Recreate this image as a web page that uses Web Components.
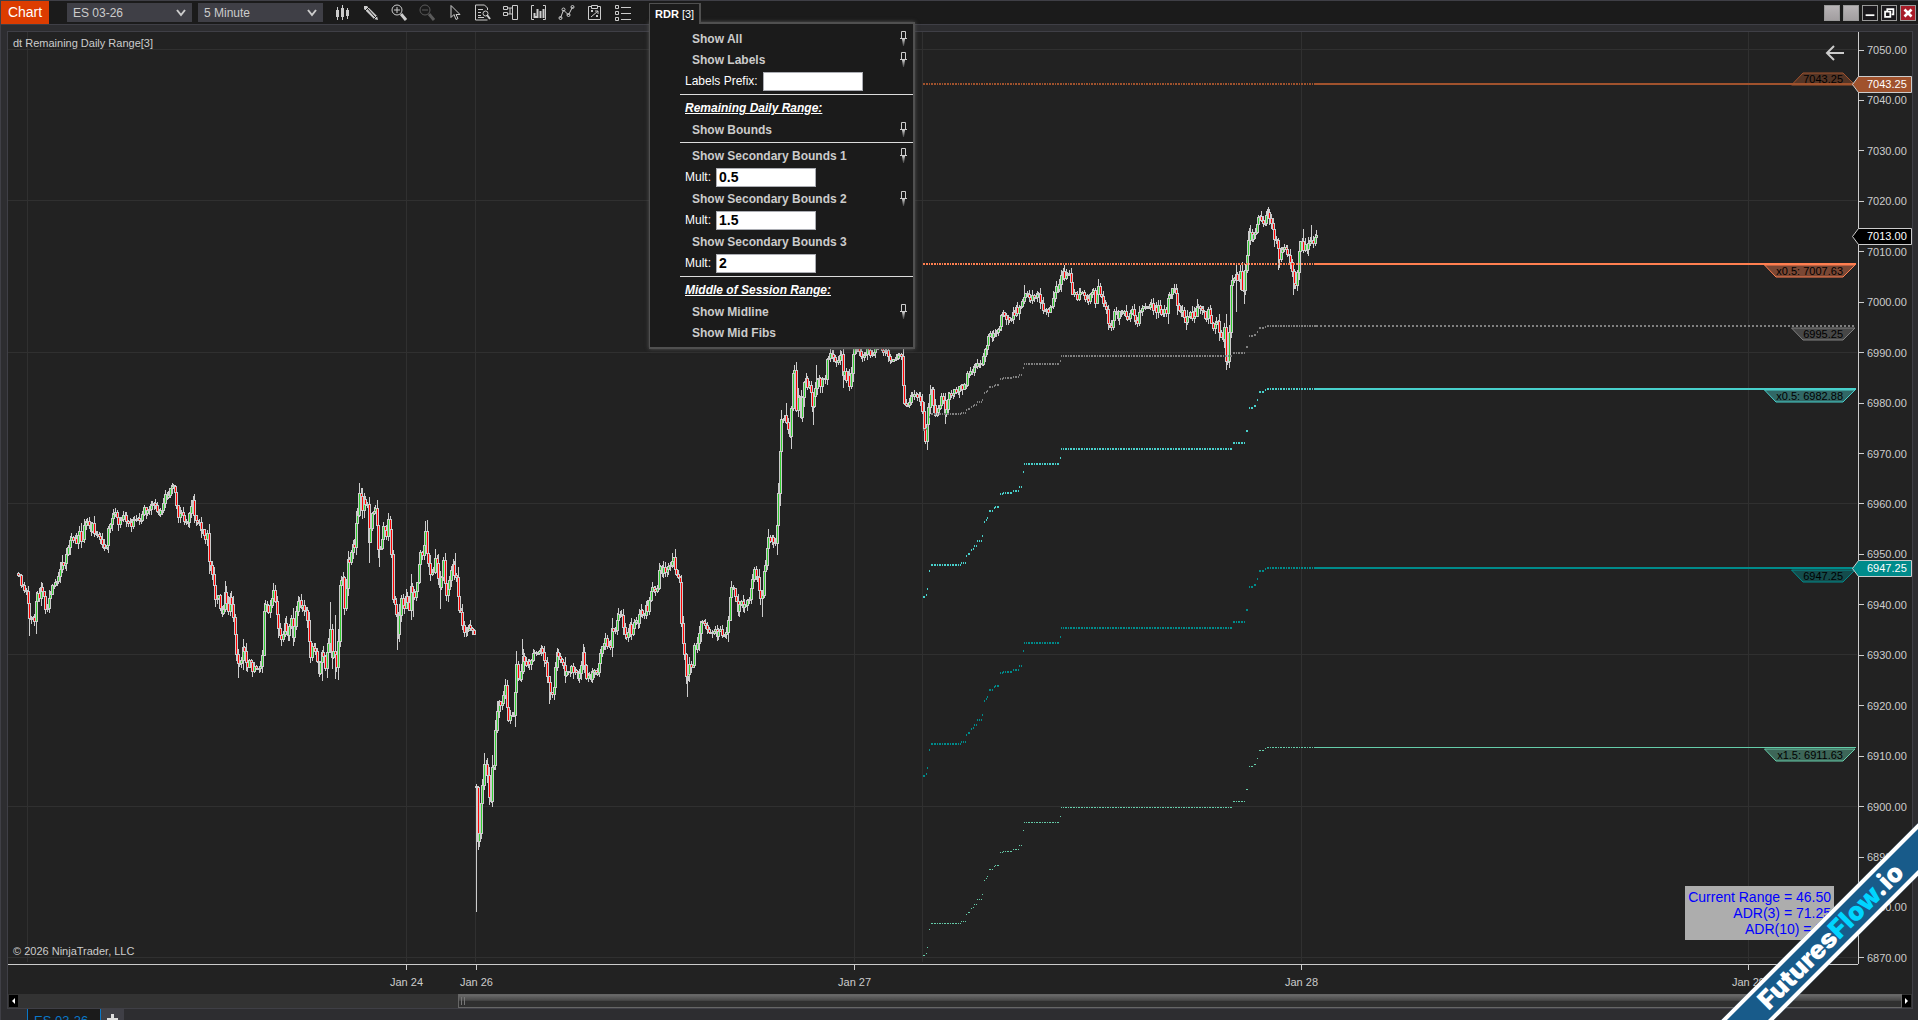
<!DOCTYPE html>
<html lang="en">
<head>
<meta charset="utf-8">
<title>Chart - ES 03-26</title>
<style>
  html, body {
    height: 100%;
    margin: 0;
    overflow: hidden;
    background: #2d2d30;
    color: #ccc;
    font-family: "Liberation Sans", Arial, sans-serif;
    font-size: 11px;
  }
</style>
</head>
<body>
<chart-window></chart-window>

<script>
// ---------- Icons ----------

const ICONS = {
  candles: '<path d="M3.5 3v3M3.5 13v3M8.5 1v3M8.5 13v3M13.5 4v2M13.5 12v3"/><path d="M2 6h3v7H2zM7 4h3v9H7zM12 6h3v6h-3z" fill="currentColor" stroke="none"/>',
  pencil: '<path d="M2 2l3 0 10 10 1 4-4-1L2 5z" fill="currentColor" stroke="none"/><path d="M3 7l4-4M12 15l3-3M5 4l8 9" stroke="#1b1b1b"/>',
  zoomIn: '<circle cx="7" cy="6" r="5"/><path d="M7 3v6M4 6h6"/><path d="M11 10l5 6" stroke-width="3"/>',
  zoomOut: '<circle cx="7" cy="6" r="5"/><path d="M4 6h6"/><path d="M11 10l5 6" stroke-width="3"/>',
  cursor: '<path d="M5 1.5v12l3-3 2 5 2-1-2-4h4z"/>',
  report: '<path d="M13.500 6V4l-3-3h-9v15h12M4 5.500h5M4 8.500h3M4 11.500h3M4 13.500h6"/><circle cx="11.500" cy="9.500" r="2.500"/><path d="M13 11l3 4" stroke-width="2"/>',
  panels: '<path d="M1.500 2.500h4v3h-4zM1.500 8.500h4v3h-4zM6 4h4M6 10h4M10.500 1.500h5v14h-5zM8 4v6"/>',
  indicators: '<path d="M4 1.500H1.500V15.500H4M13 1.500h2.500v14H13"/><path d="M4.500 9v5M7.500 5v9M10.500 7v7M13.500 5v9M6 12v2" stroke-width="2"/>',
  strategy: '<path d="M2.500 14l3-8 5 5 4-8"/><circle cx="2.500" cy="14" r="1.500"/><circle cx="5.500" cy="5.500" r="1.500"/><circle cx="10.500" cy="11" r="1.500"/><circle cx="14.500" cy="3" r="1.500"/>',
  template: '<path d="M5 2.500H2.500v13h12v-13H12M5.500 1.500h6v3h-6zM5 6l2 2M7 6l-2 2M10 11l2 2M12 11l-2 2M5 13l7-6M9 7h3v3"/>',
  list: '<path d="M1.500 1.500h3v3h-3zM1.500 7.500h3v3h-3zM1.500 13.500h3v3h-3zM7 3.500h10M7 9.500h10M7 15.500h10"/>'
};

class ToolIcon extends HTMLElement {
  constructor() {
    super();
    this.attachShadow({ mode: 'open' });
  }

  connectedCallback() {
    const name = this.getAttribute('name');
    const disabled = this.hasAttribute('off');
    this.shadowRoot.innerHTML = `
      <style>
        :host { display: block; }
        button {
          display: grid;
          place-items: center;
          width: 28px;
          height: 22px;
          padding: 0;
          border: 0;
          background: none;
          color: #ccc;
        }
        button:disabled { color: #5a5a5a; }
        svg { width: 18px; height: 18px; }
      </style>
      <button type="button" aria-label="${this.getAttribute('label')}" ${disabled ? 'disabled' : ''}>
        <svg viewBox="0 0 18 18" fill="none" stroke="currentColor">${ICONS[name]}</svg>
      </button>
    `;
  }
}
customElements.define('tool-icon', ToolIcon);

class WindowButton extends HTMLElement {
  constructor() {
    super();
    this.attachShadow({ mode: 'open' });
  }

  connectedCallback() {
    const kind = this.getAttribute('kind');
    const glyphs = {
      blank: '',
      minimize: '<path d="M3 10.500h10" stroke-width="2"/>',
      restore: '<path d="M6 6V3.500h7v6h-2" stroke-width="2"/><path d="M3.500 6.500h6v6h-6z" stroke-width="2"/>',
      close: '<path d="M4 4l8 8M12 4l-8 8" stroke-width="3"/>'
    };
    this.shadowRoot.innerHTML = `
      <style>
        :host { display: block; }
        button {
          display: block;
          width: 16px;
          height: 16px;
          padding: 0;
          border: 1px solid #999;
          background: #1a181c;
        }
        .blank { background: linear-gradient(#b8b4b6, #a29ea0); }
        .close { background: #a81c28; }
        svg { display: block; width: 14px; height: 14px; }
      </style>
      <button type="button" class="${kind}" aria-label="${this.getAttribute('label')}">
        <svg viewBox="0 0 16 16" fill="none" stroke="#fff">${glyphs[kind]}</svg>
      </button>
    `;
  }
}
customElements.define('window-button', WindowButton);

class ToolSelect extends HTMLElement {
  constructor() {
    super();
    this.attachShadow({ mode: 'open' });
  }

  connectedCallback() {
    this.shadowRoot.innerHTML = `
      <style>
        :host { display: grid; width: 125px; height: 19px; align-items: center; }
        select, svg { grid-area: 1 / 1; }
        select {
          appearance: none;
          width: 100%;
          height: 100%;
          padding: 0 6px;
          border: 0;
          background: #3f3f46;
          color: #ccc;
          font: 12px "Liberation Sans", Arial, sans-serif;
        }
        svg { justify-self: end; width: 10px; height: 8px; margin-right: 6px; pointer-events: none; }
      </style>
      <select aria-label="${this.getAttribute('label')}"><option>${this.getAttribute('value')}</option></select>
      <svg viewBox="0 0 10 8" fill="none" stroke="#ccc" stroke-width="2"><path d="M1 1l4 5 4-5"/></svg>
    `;
  }
}
customElements.define('tool-select', ToolSelect);

// ---------- Indicator menu ----------

class MenuToggle extends HTMLElement {
  constructor() {
    super();
    this.attachShadow({ mode: 'open' });
  }

  connectedCallback() {
    const pin = this.hasAttribute('pinned')
      ? `<svg viewBox="0 0 7 15" fill="none">
           <defs><linearGradient id="fade" x2="0" y2="1"><stop stop-color="#ccc"/><stop offset="1" stop-color="#444"/></linearGradient></defs>
           <path d="M1.500 7V0.500h4V7M0 7.500h7" stroke="#ccc"/><path d="M2 8h3l-1 7h-1z" fill="url(#fade)"/>
         </svg>`
      : '';
    this.shadowRoot.innerHTML = `
      <style>
        :host { display: block; }
        button {
          display: flex;
          justify-content: space-between;
          align-items: center;
          width: 100%;
          height: 21px;
          padding: 0 6px 0 12px;
          border: 0;
          background: none;
          color: #ccc;
          font: bold 12px "Liberation Sans", Arial, sans-serif;
        }
        svg { width: 7px; height: 15px; }
      </style>
      <button type="button" aria-pressed="${this.hasAttribute('pinned')}"><slot></slot>${pin}</button>
    `;
  }
}
customElements.define('menu-toggle', MenuToggle);

class MenuField extends HTMLElement {
  constructor() {
    super();
    this.attachShadow({ mode: 'open' });
  }

  connectedCallback() {
    this.shadowRoot.innerHTML = `
      <style>
        :host { display: block; }
        div { display: flex; align-items: center; gap: 5px; height: 22px; padding-left: 5px; color: #fff; }
        label { font-size: 12px; }
        input {
          box-sizing: border-box;
          width: 100px;
          height: 19px;
          padding: 0 2px;
          border: 1px solid #abadb3;
          background: #fff;
          color: #000;
          font: bold 14px "Liberation Sans", Arial, sans-serif;
        }
      </style>
      <div>
        <label for="field">${this.getAttribute('label')}</label>
        <input id="field" type="text" value="${this.getAttribute('value') || ''}">
      </div>
    `;
  }
}
customElements.define('menu-field', MenuField);

class IndicatorMenu extends HTMLElement {
  constructor() {
    super();
    this.attachShadow({ mode: 'open' });
  }

  connectedCallback() {
    this.shadowRoot.innerHTML = `
      <style>
        :host { display: block; position: relative; z-index: 5; align-self: flex-end; }
        .tab {
          position: relative;
          z-index: 1;
          display: block;
          height: 21px;
          padding: 0 5px;
          border: 1px solid #505050;
          border-width: 1px 2px 0 1px;
          background: #1b1b1b;
          color: #fff;
          font: 11px/18px "Liberation Sans", Arial, sans-serif;
        }
        .menu {
          position: absolute;
          top: 19px;
          left: 0;
          box-sizing: border-box;
          width: 266px;
          padding: 4px 0 4px 30px;
          border: 1px solid #505050;
          border-width: 2px 2px 2px 1px;
          background: #1b1b1b;
          box-shadow: 0 0 4px #555;
        }
        hr { height: 1px; margin: 2px 0; border: 0; background: #ddd; }
        h2 {
          height: 22px;
          margin: 0;
          padding-left: 5px;
          color: #fff;
          font: italic bold 12px/23px "Liberation Sans", Arial, sans-serif;
          text-decoration: underline;
        }
      </style>
      <button class="tab" type="button" aria-expanded="true"><b>RDR</b> [3]</button>
      <div class="menu">
        <menu-toggle pinned>Show All</menu-toggle>
        <menu-toggle pinned>Show Labels</menu-toggle>
        <menu-field label="Labels Prefix:"></menu-field>
        <hr>
        <h2>Remaining Daily Range:</h2>
        <menu-toggle pinned>Show Bounds</menu-toggle>
        <hr>
        <menu-toggle pinned>Show Secondary Bounds 1</menu-toggle>
        <menu-field label="Mult:" value="0.5"></menu-field>
        <menu-toggle pinned>Show Secondary Bounds 2</menu-toggle>
        <menu-field label="Mult:" value="1.5"></menu-field>
        <menu-toggle>Show Secondary Bounds 3</menu-toggle>
        <menu-field label="Mult:" value="2"></menu-field>
        <hr>
        <h2>Middle of Session Range:</h2>
        <menu-toggle pinned>Show Midline</menu-toggle>
        <menu-toggle>Show Mid Fibs</menu-toggle>
      </div>
    `;
  }
}
customElements.define('indicator-menu', IndicatorMenu);

class ChartToolbar extends HTMLElement {
  constructor() {
    super();
    this.attachShadow({ mode: 'open' });
  }

  connectedCallback() {
    this.shadowRoot.innerHTML = `
      <style>
        :host {
          display: flex;
          align-items: center;
          box-sizing: border-box;
          height: 25px;
          border: 1px solid #3f3f46;
          border-right: 0;
          background: #1b1b1b;
        }
        .title {
          align-self: stretch;
          width: 48px;
          margin: 0 18px 0 0;
          background: #dc3c00;
          color: #fff;
          font: 14px/22px "Liberation Sans", Arial, sans-serif;
          text-align: center;
        }
        tool-select + tool-select { margin-left: 6px; }
        .tools { display: flex; margin: 0 12px 0 6px; }
        .window { display: flex; gap: 3px; margin: 0 2px 0 auto; }
      </style>
      <h1 class="title">Chart</h1>
      <tool-select label="Instrument" value="ES 03-26"></tool-select>
      <tool-select label="Interval" value="5 Minute"></tool-select>
      <div class="tools">
        <tool-icon name="candles" label="Chart style"></tool-icon>
        <tool-icon name="pencil" label="Drawing tools"></tool-icon>
        <tool-icon name="zoomIn" label="Zoom in"></tool-icon>
        <tool-icon name="zoomOut" label="Zoom out" off></tool-icon>
        <tool-icon name="cursor" label="Cursor"></tool-icon>
        <tool-icon name="report" label="Data box"></tool-icon>
        <tool-icon name="panels" label="Chart trader"></tool-icon>
        <tool-icon name="indicators" label="Indicators"></tool-icon>
        <tool-icon name="strategy" label="Strategies"></tool-icon>
        <tool-icon name="template" label="Strategy performance"></tool-icon>
        <tool-icon name="list" label="Properties"></tool-icon>
      </div>
      <indicator-menu></indicator-menu>
      <div class="window">
        <window-button kind="blank" label="Link instrument"></window-button>
        <window-button kind="blank" label="Link interval"></window-button>
        <window-button kind="minimize" label="Minimize"></window-button>
        <window-button kind="restore" label="Restore"></window-button>
        <window-button kind="close" label="Close"></window-button>
      </div>
    `;
  }
}
customElements.define('chart-toolbar', ChartToolbar);

// ---------- Chart ----------

const PLOT = { left: 8, top: 32, width: 1850, height: 932 };
const BAR_STEP = 1.616;
const SESSION_LINES = [27, 406, 475, 854, 922, 1301, 1748];

const yOf = (price) => 49.5 + (7050 - price) * 5.044;
const topPct = (price) => ((yOf(price) - PLOT.top) / PLOT.height * 100).toFixed(2) + '%';

// close path of each stretch of bars, as x,y pairs in plot units
const STRETCHES = [
  `18,573 22,588 25,591 27,587 29,623 32,612 34,620 36,595 38,598 41,590 43,592 46,610 49,598 53,583 57,582
   61,563 67,557 69,538 71,542 74,538 77,547 78,532 82,540 84,530 87,520 88,529 92,525 95,532 100,542 107,546
   109,525 112,514 115,516 118,523 123,517 128,523 133,523 137,517 142,524 143,509 147,514 151,504 156,509
   160,512 164,500 166,492 168,495 171,489 174,489 177,513 182,517 188,522 189,509 193,503 195,518 199,520
   201,530 204,537 207,532 208,560 211,567 214,590 216,602 218,592 221,613 223,613 225,593 228,610 230,598
   233,617 235,640 237,665 240,663 242,651 245,652 247,667 250,657 253,670 257,670 260,673 262,655 263,618
   266,603 269,612 271,595 274,590 276,612 278,625 282,638 284,623 288,633 291,618 292,640 295,627 296,608
   297,597 300,602 303,610 306,613 308,630 310,663 313,645 316,648 318,673 320,667 322,653 325,667 328,647
   330,630 332,665 334,640 336,672 338,640 339,596 340,572 343,580 345,615 347,558 349,568 352,547 355,550
   356,518 358,510 359,492 362,507 365,499 368,512 369,550 371,512 376,509 378,545 382,543 383,520 386,542
   388,522 391,540 392,590 396,612 397,637 399,620 401,595 404,610 406,593 409,608 411,578 413,600 417,587
   419,558 420,547 423,557 425,532 427,555 430,572 433,573 436,555 438,573 440,590 443,564 446,592 449,587
   452,563 454,580 457,576 458,608 462,615 463,635 466,627 471,628 475,635`,
  `476,786 477,842 479,837 480,803 482,792 484,762 487,762 488,793 491,800 492,767 494,765 495,735 496,722
   498,703 501,711 503,702 505,686 507,706 508,717 512,710 514,713 516,660 519,687 521,677 523,652 526,663
   530,662 532,652 535,653 538,649 542,654 545,660 548,683 550,689 553,693 555,665 557,652 560,663 565,672
   568,667 573,672 577,678 581,670 582,655 583,654 586,677 590,677 593,670 598,676 599,662 602,648 604,637
   607,645 611,643 612,626 616,628 618,617 622,616 623,630 626,635 629,626 632,633 636,617 638,625 639,610
   642,617 645,609 648,610 649,597 652,587 657,587 659,562 662,570 664,572 667,570 670,563 673,557 675,572
   678,577 680,587 681,622 683,645 685,663 687,682 689,664 692,667 694,646 697,646 699,635 702,616 706,623
   709,632 713,635 717,632 720,628 723,635 726,640 728,622 729,595 733,586 735,600 738,607 742,603 743,610
   747,603 749,597 751,582 754,571 757,578 759,590 762,598 764,568 766,560 767,545 770,537 775,542 776,537
   777,515 779,473 780,450 781,425 784,415 787,423 790,437 792,380 794,365 796,406 799,395 801,419 803,387
   805,377 808,388 811,393 813,412 814,387 817,380 821,385 824,380 826,378 827,355 832,356 836,362 839,355
   841,355 843,373 847,378 850,385 852,362 853,347 858,345 861,358 865,353 868,345 872,358 877,345 883,350
   888,353 892,360 897,352 901,354 902,383 904,403 907,407 909,398 912,392 917,397 921,400 923,417 924,439
   926,438 927,417 929,402 931,390 932,392 934,415 937,407 941,398 943,397 944,414 947,405 948,393 952,395
   954,389 958,390 962,387 966,383 967,375 972,373 977,363 982,366 983,358 984,345 988,342 989,333 993,335
   994,330 1000,329 1001,317 1004,314 1010,317 1014,312 1021,310 1023,295 1027,297 1033,297 1038,297
   1042,307 1045,312 1049,310 1053,297 1056,288 1060,287 1061,273 1065,277 1069,277 1071,287 1075,295
   1078,299 1080,290 1084,293 1088,299 1091,287 1093,288 1095,302 1098,290 1102,297 1105,305 1107,317
   1111,328 1113,317 1118,313 1122,318 1125,312 1129,320 1132,313 1136,325 1138,313 1142,307 1148,307
   1155,307 1160,310 1164,315 1167,307 1168,295 1170,299 1172,289 1176,291 1177,305 1182,312 1185,324
   1188,312 1193,315 1198,307 1203,315 1207,317 1209,308 1211,328 1214,323 1217,320 1221,333 1223,338
   1224,327 1226,361 1228,361 1229,333 1230,315 1231,275 1235,277 1237,280 1241,275 1243,299 1245,272
   1247,258 1248,243 1250,235 1255,233 1257,223 1259,213 1262,227 1265,222 1267,213 1270,217 1272,232
   1276,237 1278,248 1279,262 1282,250 1283,238 1286,255 1289,253 1292,267 1293,283 1296,290 1297,267
   1299,243 1301,239 1303,247 1306,248 1309,238 1312,235 1313,242 1317,237`
];

// long shadows: x, high, low
const LONG_WICKS = [
  [29, 600, 636], [322, 660, 681], [330, 602, 640], [335, 615, 679], [238, 660, 678], [359, 484, 500],
  [369, 520, 563], [379, 530, 567], [397, 620, 650], [425, 523, 540], [440, 580, 609], [455, 553, 570],
  [413, 590, 617], [476, 786, 912], [478, 830, 850], [522, 639, 655], [549, 680, 704], [583, 648, 660],
  [687, 670, 697], [672, 553, 560], [762, 590, 617], [791, 420, 447], [786, 403, 420], [813, 400, 425],
  [816, 365, 380], [925, 430, 443], [930, 385, 395], [1024, 285, 295], [1061, 270, 280], [1111, 320, 331],
  [1186, 320, 330], [1236, 265, 312], [1240, 268, 290], [1244, 280, 304], [1249, 228, 245],
  [1267, 209, 215], [1278, 250, 270], [1293, 280, 295], [1303, 229, 240], [1311, 225, 240]
];

// session mid/bound steps: first x of the step, y of the upper secondary bound
const STEPS = [
  [923, 597], [925, 595], [927, 589], [928, 571], [930, 565], [961, 563], [966, 556], [967, 554], [970, 550],
  [972, 549], [974, 546], [977, 541], [982, 536], [983, 522], [985, 520], [987, 518], [988, 511], [993, 508],
  [995, 507], [1000, 494], [1003, 493], [1013, 491], [1019, 487], [1022, 472], [1024, 464], [1060, 458],
  [1061, 449], [1233, 443], [1246, 431], [1248, 420], [1249, 408], [1254, 406], [1256, 402], [1257, 400],
  [1258, 392], [1265, 390], [1267, 389]
];

const LEVELS = [
  { price: 7043.25, color: '#a0522d', flat: true, up: true },
  { price: 7007.63, color: '#ff7f50', flat: true, prefix: 'x0.5: ' },
  { price: 6995.25, color: '#808080', ratio: 0.5, dotted: true },
  { price: 6982.88, color: '#48d1cc', ratio: 1, prefix: 'x0.5: ' },
  { price: 6947.25, color: '#008b8b', ratio: 1 },
  { price: 6911.63, color: '#66cdaa', ratio: 1, thin: true, prefix: 'x1.5: ' }
];

function seeded(seed) {
  let s = seed;
  return () => {
    s = (s * 1103515245 + 12345) % 2147483648;
    return s / 2147483648;
  };
}

function buildBars(text) {
  const pts = text.trim().split(/\s+/).map((p) => p.split(',').map(Number));
  const rnd = seeded(pts[0][0] * 31);
  const bars = [];
  let k = 0;
  let open = pts[0][1];
  for (let x = pts[0][0]; x <= pts[pts.length - 1][0]; x += BAR_STEP) {
    while (k < pts.length - 2 && pts[k + 1][0] < x) k++;
    const [x0, y0] = pts[k];
    const [x1, y1] = pts[k + 1];
    const t = Math.min(1, (x - x0) / (x1 - x0));
    const close = Math.round(y0 + (y1 - y0) * t + (rnd() - 0.5) * 9);
    const reach = 4 + Math.min(9, Math.abs(close - open) * 0.4);
    bars.push({
      x: Math.round(x),
      open,
      close,
      high: Math.round(Math.min(open, close) - rnd() * reach),
      low: Math.round(Math.max(open, close) + rnd() * reach)
    });
    open = close;
  }
  return bars;
}

function candleMarkup() {
  let out = '';
  for (const [x, high, low] of LONG_WICKS) {
    out += `<path fill="#ccc" d="M${x} ${high}h1v${low - high}h-1z"/>`;
  }
  for (const stretch of STRETCHES) {
    for (const b of buildBars(stretch)) {
      const top = Math.min(b.open, b.close);
      const h = Math.max(1, Math.abs(b.open - b.close));
      out += `<path fill="#ccc" d="M${b.x} ${b.high}h1v${b.low - b.high + 1}h-1zM${b.x - 1} ${top}h3v${h + 1}h-3z"/>`;
      if (h > 1) {
        out += `<path fill="${b.close < b.open ? '#32cd32' : '#f00'}" d="M${b.x} ${top + 1}h1v${h - 1}h-1z"/>`;
      }
    }
  }
  return out;
}

function levelMarkup(level) {
  const end = Math.floor(yOf(level.price));
  const h = level.thin ? 1 : 2;
  let d = '';
  let k = 0;
  for (let x = 923; x < 1317; x += BAR_STEP) {
    while (k < STEPS.length - 1 && STEPS[k + 1][0] <= x) k++;
    const y = level.flat ? end : Math.round(end + (STEPS[k][1] - 389) * level.ratio);
    d += `M${Math.floor(x)} ${y}h1v${h}h-1z`;
  }
  const dash = level.dotted ? 'stroke-dasharray="2 2"' : '';
  return `<path fill="${level.color}" d="${d}"/>
    <path fill="none" stroke="${level.color}" stroke-width="${h}" ${dash} d="M1316 ${end + h / 2}H1856"/>`;
}

class LevelLabel extends HTMLElement {
  constructor() {
    super();
    this.attachShadow({ mode: 'open' });
  }

  connectedCallback() {
    const color = this.getAttribute('color');
    const up = this.hasAttribute('up');
    const w = this.hasAttribute('wide') ? 92 : 65;
    const shape = up
      ? `M0.500 12.500L12 0.500H${w - 13}L${w - 1} 12.500z`
      : `M0.500 0.500H${w - 1}L${w - 13} 12.500H12z`;
    this.shadowRoot.innerHTML = `
      <style>
        :host { display: grid; width: ${w}px; height: 13px; color: #000; }
        svg, span { grid-area: 1 / 1; }
        svg { width: 100%; height: 100%; }
        span { padding-right: 13px; line-height: 14px; text-align: right; white-space: nowrap; }
      </style>
      <svg viewBox="0 0 ${w} 13"><path d="${shape}" fill="${color}" fill-opacity="0.400" stroke="${color}"/></svg>
      <span><slot></slot></span>
    `;
  }
}
customElements.define('level-label', LevelLabel);

class PricePlot extends HTMLElement {
  constructor() {
    super();
    this.attachShadow({ mode: 'open' });
  }

  connectedCallback() {
    const right = PLOT.left + PLOT.width;
    let grid = '';
    for (let p = 7050; p >= 6870; p -= 30) {
      grid += `M8 ${Math.floor(yOf(p)) + 0.5}H${right - 1}`;
    }
    for (const x of SESSION_LINES) {
      grid += `M${x + 0.5} 32V962`;
    }
    const labels = LEVELS.map((l) => `
      <level-label color="${l.color}" ${l.up ? 'up' : ''} ${l.prefix ? 'wide' : ''}
        style="top: ${topPct(l.price)}">${l.prefix || ''}${l.price.toFixed(2)}</level-label>`).join('');

    this.shadowRoot.innerHTML = `
      <style>
        :host { display: block; position: relative; min-width: 0; min-height: 0; overflow: hidden; }
        .drawing { position: absolute; inset: 0; width: 100%; height: 100%; shape-rendering: crispEdges; }
        .name, .legal, .back, .ranges, level-label { position: absolute; }
        .name { top: 5px; left: 5px; }
        .legal { bottom: 7px; left: 5px; }
        .back { top: 12px; right: 11px; width: 22px; height: 18px; padding: 0; border: 0; background: none; }
        .back svg { display: block; width: 20px; height: 16px; }
        level-label { right: 2px; margin-top: 1px; }
        level-label[up] { transform: translateY(-13px); }
        .ranges {
          right: 24px;
          bottom: 24px;
          box-sizing: border-box;
          padding: 3px;
          background: #adadad;
          color: #00f;
          font-size: 14px;
          line-height: 16px;
          text-align: right;
        }
      </style>
      <svg class="drawing" viewBox="8 32 1850 932" preserveAspectRatio="none">
        <path d="${grid}" stroke="#303030" fill="none"/>
        ${candleMarkup()}
        ${LEVELS.map(levelMarkup).join('')}
      </svg>
      <span class="name">dt Remaining Daily Range[3]</span>
      <span class="legal">© 2026 NinjaTrader, LLC</span>
      <button class="back" type="button" aria-label="Scroll to last bar">
        <svg viewBox="0 0 20 16" fill="none" stroke="#ccc" stroke-width="2"><path d="M19 8H2M9 1L2 8l7 7"/></svg>
      </button>
      ${labels}
      <div class="ranges">Current Range = 46.50<br>ADR(3) = 71.25<br>ADR(10) = 57</div>
    `;
  }
}
customElements.define('price-plot', PricePlot);

class PriceMarker extends HTMLElement {
  constructor() {
    super();
    this.attachShadow({ mode: 'open' });
  }

  connectedCallback() {
    this.shadowRoot.innerHTML = `
      <style>
        :host { display: grid; width: 60px; height: 17px; color: #fff; }
        svg, span { grid-area: 1 / 1; }
        svg { width: 100%; height: 100%; }
        span { padding-left: 15px; line-height: 17px; }
      </style>
      <svg viewBox="0 0 60 17"><path d="M0.500 8.500L6.500 0.500H59.500V16.500H6.500z" fill="${this.getAttribute('color')}" stroke="#ccc"/></svg>
      <span><slot></slot></span>
    `;
  }
}
customElements.define('price-marker', PriceMarker);

class PriceAxis extends HTMLElement {
  constructor() {
    super();
    this.attachShadow({ mode: 'open' });
  }

  connectedCallback() {
    let items = '';
    for (let p = 7050; p >= 6870; p -= 10) {
      items += `<li>${p.toFixed(2)}</li>`;
    }
    const markers = [[7043.25, '#a0522d'], [7013, '#000'], [6947.25, '#008b8b']].map(([p, c]) => `
      <price-marker color="${c}" style="top: ${topPct(p)}">${p.toFixed(2)}</price-marker>`).join('');
    this.shadowRoot.innerHTML = `
      <style>
        :host { display: grid; position: relative; border-left: 1px solid #ccc; }
        ul {
          display: flex;
          flex-direction: column;
          justify-content: space-between;
          margin: 11px 0 -1px;
          padding: 0;
          list-style: none;
        }
        li { display: flex; align-items: center; gap: 3px; height: 14px; line-height: 14px; }
        li::before { content: ""; width: 5px; height: 1px; background: #ccc; }
        price-marker { position: absolute; left: -7px; margin-top: -8px; }
      </style>
      <ul>${items}</ul>
      ${markers}
    `;
  }
}
customElements.define('price-axis', PriceAxis);

class TimeAxis extends HTMLElement {
  constructor() {
    super();
    this.attachShadow({ mode: 'open' });
  }

  connectedCallback() {
    const days = [[406, 'Jan 24'], [476, 'Jan 26'], [854, 'Jan 27'], [1301, 'Jan 28'], [1748, 'Jan 29']];
    this.shadowRoot.innerHTML = `
      <style>
        :host { display: block; position: relative; height: 29px; border-top: 1px solid #ccc; }
        span {
          display: grid;
          position: absolute;
          width: 60px;
          margin-left: -30px;
          justify-items: center;
          line-height: 24px;
        }
        span::before { content: ""; width: 1px; height: 5px; background: #ccc; }
      </style>
      ${days.map(([x, t]) => `<span style="left: ${((x - PLOT.left + 0.5) / PLOT.width * 100).toFixed(2)}%">${t}</span>`).join('')}
    `;
  }
}
customElements.define('time-axis', TimeAxis);

class ChartScrollbar extends HTMLElement {
  constructor() {
    super();
    this.attachShadow({ mode: 'open' });
  }

  connectedCallback() {
    this.shadowRoot.innerHTML = `
      <style>
        :host { display: grid; grid-template-columns: 9px 7fr 23fr 9px; height: 14px; padding: 0 1px; background: #333; }
        button { align-self: center; height: 12px; padding: 0; border: 0; background: #000; }
        svg { display: block; width: 9px; height: 12px; }
        .thumb {
          grid-column: 3;
          box-sizing: border-box;
          border: 1px solid #666;
          background: linear-gradient(#6a6a6a, #484848 45%, #303030 50%, #303030);
        }
        .thumb svg { margin-left: 1px; width: 8px; }
        .next { grid-column: 4; }
      </style>
      <button type="button" aria-label="Scroll left"><svg viewBox="0 0 9 12"><path d="M6 3v6L3 6z" fill="#fff"/></svg></button>
      <div class="thumb"><svg viewBox="0 0 8 12"><path d="M1.500 2v8M4.500 2v8" stroke="#777"/></svg></div>
      <button type="button" class="next" aria-label="Scroll right"><svg viewBox="0 0 9 12"><path d="M3 3v6l3-3z" fill="#fff"/></svg></button>
    `;
  }
}
customElements.define('chart-scrollbar', ChartScrollbar);

class ChartTabs extends HTMLElement {
  constructor() {
    super();
    this.attachShadow({ mode: 'open' });
  }

  connectedCallback() {
    this.shadowRoot.innerHTML = `
      <style>
        :host { display: flex; height: 11px; padding-left: 27px; overflow: hidden; }
        button { height: 24px; padding: 0; border: 0; font: 13px/20px "Liberation Sans", Arial, sans-serif; }
        .active {
          width: 74px;
          padding-left: 6px;
          border: 1px solid #0a78c8;
          border-width: 0 1px;
          background: #1b1b1b;
          color: #0a78c8;
          text-align: left;
        }
        .add { width: 23px; background: #3f3f46; }
        svg { display: block; width: 11px; height: 11px; margin: -3px auto 0; }
      </style>
      <button type="button" class="active">ES 03-26</button>
      <button type="button" class="add" aria-label="Add tab">
        <svg viewBox="0 0 11 11"><path d="M5.500 0v11M0 5.500h11" stroke="#ddd" stroke-width="3"/></svg>
      </button>
    `;
  }
}
customElements.define('chart-tabs', ChartTabs);

class CornerRibbon extends HTMLElement {
  constructor() {
    super();
    this.attachShadow({ mode: 'open' });
  }

  connectedCallback() {
    this.shadowRoot.innerHTML = `
      <style>
        :host {
          display: block;
          position: absolute;
          right: -113px;
          bottom: 65px;
          z-index: 10;
          box-sizing: border-box;
          width: 400px;
          height: 37px;
          border: 4px solid #fff;
          background: #185b8a;
          color: #fff;
          font: 900 26px/28px Inter, "Open Sans", sans-serif;
          text-align: center;
          transform: rotate(-45deg);
        }
        ::slotted(em) { color: #00d4ff; font-style: normal; }
      </style>
      <slot></slot>
    `;
  }
}
customElements.define('corner-ribbon', CornerRibbon);

class ChartWindow extends HTMLElement {
  constructor() {
    super();
    this.attachShadow({ mode: 'open' });
  }

  connectedCallback() {
    this.shadowRoot.innerHTML = `
      <style>
        :host {
          display: grid;
          grid-template-rows: auto 1fr auto;
          position: relative;
          height: 100vh;
          overflow: hidden;
          background: #2d2d30;
          box-shadow: inset 1px 0 #3f3f46;
        }
        main {
          display: grid;
          grid-template: 1fr auto auto / 1fr 54px;
          min-height: 0;
          margin: 6px 5px 0 7px;
          border: 1px solid #3f3f46;
          background: #222;
        }
        price-axis { box-sizing: border-box; }
        time-axis { grid-column: 1; }
        chart-scrollbar { grid-column: 1 / -1; }
      </style>
      <chart-toolbar></chart-toolbar>
      <main>
        <price-plot></price-plot>
        <price-axis></price-axis>
        <time-axis></time-axis>
        <chart-scrollbar></chart-scrollbar>
      </main>
      <chart-tabs></chart-tabs>
      <corner-ribbon>Futures<em>Flow</em>.io</corner-ribbon>
    `;
  }
}
customElements.define('chart-window', ChartWindow);
</script>
</body>
</html>
